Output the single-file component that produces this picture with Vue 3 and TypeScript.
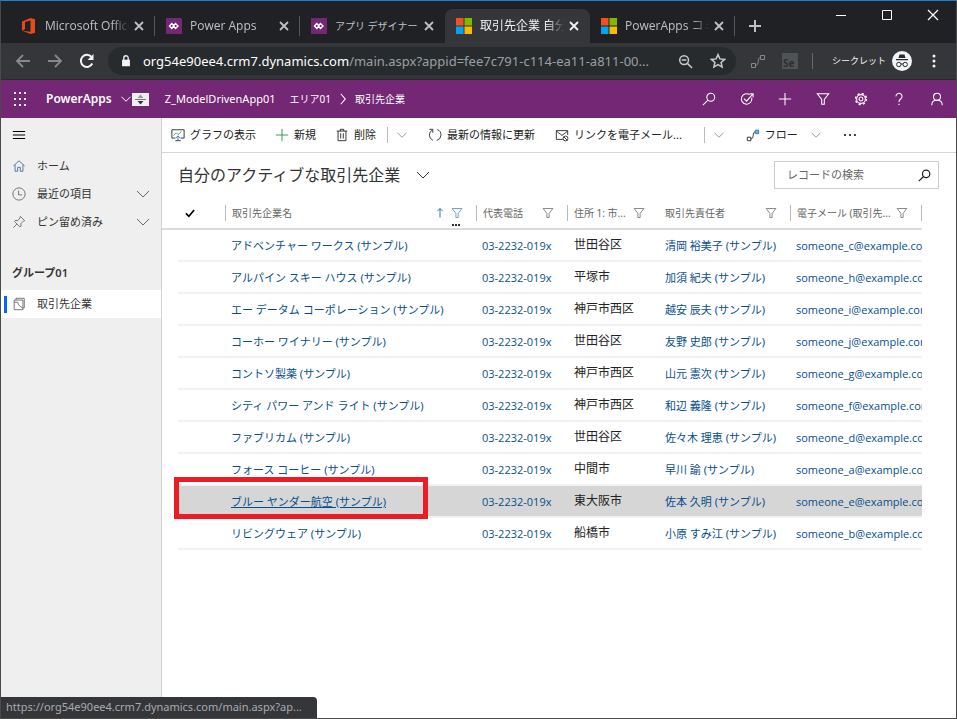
<script setup lang="ts">
import { h, ref } from 'vue'

type Shape = [string, Record<string, string | number>]

const line = (d: string, extra: Record<string, string | number> = {}): Shape => ['path', { d, ...extra }]
const solid = { fill: 'currentColor', stroke: 'none' }

const icons: Record<string, Shape[]> = {
  close: [line('M4 4l8 8M12 4l-8 8')],
  winClose: [line('M3 3l10 10M13 3L3 13')],
  plus: [line('M8 2v12M2 8h12')],
  add: [line('M8 1v14M1 8h14')],
  minimize: [line('M3 8.5h10')],
  maximize: [line('M3.5 3.5h9v9h-9z')],
  back: [line('M15 8H2M8 2L2 8l6 6')],
  forward: [line('M1 8h13M8 2l6 6-6 6')],
  reload: [line('M13.3 10.5A6 6 0 1 1 12.5 4'), line('M14.5 1v6h-6z', solid)],
  lock: [
    line('M3.5 6.5h9v7.5h-9z', solid),
    line('M5.5 7V4.5a2.5 2.5 0 0 1 5 0V7')
  ],
  zoomOut: [['circle', { cx: 6.5, cy: 6.5, r: 4.7 }], line('M10 10l5 5M4 6.5h5')],
  star: [line('M8 1.6l1.9 4.3 4.7.5-3.5 3.1 1 4.6L8 11.7l-4.1 2.4 1-4.6-3.5-3.1 4.7-.5z')],
  flow: [line('M1.5 10.5h4v4h-4zM10.5 2.5h4v4h-4zM5.5 12.5c4 0 1.5-8 5-8')],
  search: [['circle', { cx: 10, cy: 6, r: 4.5 }], line('M6.8 9.2L1 15')],
  target: [line('M11 3A6 6 0 1 0 13.4 6.5M4.5 7.5L7.5 10.5 14.5 2.5M11 2h4v4')],
  filter: [line('M1.5 2h13L9.5 8.5V14H6.5V8.5z')],
  gear: [
    ['circle', { cx: 8, cy: 8, r: 5 }],
    ['circle', { cx: 8, cy: 8, r: 2.2 }],
    ['circle', { cx: 8, cy: 8, r: 6.3, 'stroke-dasharray': '2.5 2.45', 'stroke-width': 1.6 }]
  ],
  help: [line('M4.5 5a3.5 3.5 0 1 1 6 2.4C9 8.8 8 9.3 8 11.3'), line('M7.3 13.5h1.4v1.4H7.3z', solid)],
  person: [['circle', { cx: 8, cy: 5.5, r: 4 }], line('M2 15c0-4 2.5-5.5 6-5.5s6 1.5 6 5.5')],
  menu: [line('M1 4h14M1 8h14M1 12h14')],
  home: [line('M1.5 8L8 2l6.5 6M3.5 6.5V14h3v-4.5h3V14h3V6.5')],
  clock: [['circle', { cx: 8, cy: 8, r: 7 }], line('M7.5 4v5h4')],
  pin: [line('M9.5 1.5l5 5-1.5.5-3 3 .5 2.5-1.5 1L3 7.5l1-1.5 2.5.5 2.5-3zM5.5 10.5L1.5 14.5')],
  chevron: [line('M2 5l6 6 6-6')],
  chevronRight: [line('M5 1l6 7-6 7')],
  entity: [line('M2.5 3.5h10v11h-10zM4.5 3.5v-2h9.5v11h-1.5M2.5 6h4l1 3 5 4')],
  chart: [
    line('M1 2h14v9.5h-4M5 11.5H1V2M5 14.5h6'),
    line('M3 8.5l3-3 2 2 4-3.5', { stroke: '#2a9d55' }),
    line('M8 9v5M5.5 11.5L8 9l2.5 2.5', { stroke: '#2c74b5' })
  ],
  trash: [line('M2 3.5h12M6 3.5v-2h4v2M3.5 3.5v11h9v-11M6.5 6v6M9.5 6v6')],
  refresh: [line('M10.5 1.8A6.5 6.5 0 0 1 10 14.2M5.5 14A6.5 6.5 0 0 1 5 2.3M1.5 1.5h4V5.5')],
  mail: [line('M14.5 8V3h-13v10H9M1.5 3.5L8 8.5l6.5-5'), ['circle', { cx: 12, cy: 12, r: 2.8 }], line('M10 10l4 4')],
  commandFlow: [
    line('M1.5 10.5h4v4h-4zM5.5 12.5c4 0 1.5-8 5-8'),
    line('M10.5 2.5h4v4h-4z', { fill: '#66b2e8', stroke: '#2c74b5' })
  ],
  up: [line('M8 14V2M4.5 5.5L8 2l3.5 3.5')],
  check: [line('M2.5 8.5l4 4 7-8.5')]
}

const Icon = (props: { name: string; size?: number; weight?: number }) =>
  h(
    'svg',
    {
      class: 'icon',
      viewBox: '0 0 16 16',
      width: props.size ?? 14,
      height: props.size ?? 14,
      fill: 'none',
      stroke: 'currentColor',
      'stroke-width': props.weight ?? 1,
      'aria-hidden': 'true'
    },
    icons[props.name].map(([tag, attrs]) => h(tag, attrs))
  )
Icon.props = ['name', 'size', 'weight']

interface Tab { title: string; logo: 'office' | 'power' | 'windows'; active?: boolean; compact?: boolean }
const tabs: Tab[] = [
  { title: 'Microsoft Office', logo: 'office' },
  { title: 'Power Apps', logo: 'power' },
  { title: 'アプリ デザイナー', logo: 'power', compact: true },
  { title: '取引先企業 自分', logo: 'windows', active: true },
  { title: 'PowerApps コミ', logo: 'windows' }
]

const headerActions = [
  { icon: 'search', label: '検索' },
  { icon: 'target', label: 'タスク' },
  { icon: 'add', label: '追加' },
  { icon: 'filter', label: 'フィルター' },
  { icon: 'gear', label: '設定' },
  { icon: 'help', label: 'ヘルプ' },
  { icon: 'person', label: 'アカウント' }
]

const navItems = [
  { icon: 'home', label: 'ホーム', expandable: false },
  { icon: 'clock', label: '最近の項目', expandable: true },
  { icon: 'pin', label: 'ピン留め済み', expandable: true }
]

interface Account { name: string; city: string; contact: string; email: string }
const accounts: Account[] = [
  { name: 'アドベンチャー ワークス (サンプル)', city: '世田谷区', contact: '清岡 裕美子 (サンプル)', email: 'c' },
  { name: 'アルパイン スキー ハウス (サンプル)', city: '平塚市', contact: '加須 紀夫 (サンプル)', email: 'h' },
  { name: 'エー データム コーポレーション (サンプル)', city: '神戸市西区', contact: '越安 辰夫 (サンプル)', email: 'i' },
  { name: 'コーホー ワイナリー (サンプル)', city: '世田谷区', contact: '友野 史郎 (サンプル)', email: 'j' },
  { name: 'コントソ製薬 (サンプル)', city: '神戸市西区', contact: '山元 憲次 (サンプル)', email: 'g' },
  { name: 'シティ パワー アンド ライト (サンプル)', city: '神戸市西区', contact: '和辺 義隆 (サンプル)', email: 'f' },
  { name: 'ファブリカム (サンプル)', city: '世田谷区', contact: '佐々木 理恵 (サンプル)', email: 'd' },
  { name: 'フォース コーヒー (サンプル)', city: '中間市', contact: '早川 諭 (サンプル)', email: 'a' },
  { name: 'ブルー ヤンダー航空 (サンプル)', city: '東大阪市', contact: '佐本 久明 (サンプル)', email: 'e' },
  { name: 'リビングウェア (サンプル)', city: '船橋市', contact: '小原 すみ江 (サンプル)', email: 'b' }
]
const columns = ['取引先企業名', '代表電話', '住所 1: 市...', '取引先責任者', '電子メール (取引先...']
const hovered = 8
const query = ref('')
</script>

<template>
  <div class="window">
    <header class="tab-strip">
      <div v-for="tab in tabs" :key="tab.title" class="tab" :class="{ active: tab.active, compact: tab.compact }">
        <svg v-if="tab.logo === 'office'" class="logo" viewBox="0 0 16 16" aria-hidden="true">
          <path d="M1 3.5L9.5 0 14 1.3v13.4L9.5 16 1 12.8l8.5 1V2.5L4 4v7.3l-3 1.5z" fill="#e64a19" />
        </svg>
        <svg v-else-if="tab.logo === 'power'" class="logo" viewBox="0 0 16 16" aria-hidden="true">
          <path d="M0 0h16v16H0z" fill="#742774" />
          <path d="M5.8 5.5L3.5 8l2.3 2.5L8 8zM9.5 5.5L7.3 8l2.2 2.5L12 8z" fill="none" stroke="#fff" stroke-width="1.4" />
        </svg>
        <svg v-else class="logo" viewBox="0 0 16 16" aria-hidden="true">
          <path d="M0 0h7.5v7.5H0z" fill="#f25022" /><path d="M8.5 0H16v7.5H8.5z" fill="#7fba00" />
          <path d="M0 8.5h7.5V16H0z" fill="#00a4ef" /><path d="M8.5 8.5H16V16H8.5z" fill="#ffb900" />
        </svg>
        <span class="tab-title">{{ tab.title }}</span>
        <button class="tab-close" aria-label="タブを閉じる"><Icon name="close" :size="16" :weight="1.8" /></button>
      </div>
      <button class="new-tab" aria-label="新しいタブ"><Icon name="plus" :size="16" :weight="2" /></button>
      <div class="window-controls">
        <button aria-label="最小化"><Icon name="minimize" :size="16" /></button>
        <button aria-label="最大化"><Icon name="maximize" :size="16" /></button>
        <button aria-label="閉じる"><Icon name="winClose" :size="16" :weight="1.3" /></button>
      </div>
    </header>

    <div class="toolbar">
      <button class="tool dim" aria-label="戻る"><Icon name="back" :size="16" :weight="1.8" /></button>
      <button class="tool dim" aria-label="進む"><Icon name="forward" :size="16" :weight="1.8" /></button>
      <button class="tool" aria-label="再読み込み"><Icon name="reload" :size="16" :weight="2" /></button>
      <div class="omnibox">
        <Icon name="lock" :size="14" :weight="1.5" />
        <span class="url"><b>org54e90ee4.crm7.dynamics.com</b>/main.aspx?appid=fee7c791-c114-ea11-a811-00...</span>
        <button class="tool" aria-label="縮小"><Icon name="zoomOut" :size="15" :weight="1.6" /></button>
        <button class="tool" aria-label="ブックマーク"><Icon name="star" :size="16" :weight="1.5" /></button>
      </div>
      <button class="tool ext" aria-label="フロー拡張"><Icon name="flow" :size="16" /></button>
      <button class="tool" aria-label="Selenium">
        <span class="selenium">Se</span>
      </button>
      <span class="tool-divider"></span>
      <span class="secret">シークレット</span>
      <svg class="incognito" viewBox="0 0 20 20" aria-hidden="true">
        <circle cx="10" cy="10" r="10" fill="#f1f3f4" />
        <path d="M6.5 7l1-3.5h5l1 3.5zM4 8h12v1.3H4z" fill="#292c2f" />
        <g fill="none" stroke="#292c2f"><circle cx="6.8" cy="13.5" r="2.2" /><circle cx="13.2" cy="13.5" r="2.2" /><path d="M9 13h2" /></g>
      </svg>
      <button class="tool more" aria-label="メニュー">
        <svg viewBox="0 0 4 14" width="4" height="14" fill="currentColor"><circle cx="2" cy="2" r="1.5" /><circle cx="2" cy="7" r="1.5" /><circle cx="2" cy="12" r="1.5" /></svg>
      </button>
    </div>

    <div class="app-header">
      <button class="waffle" aria-label="アプリ起動ツール"><i v-for="n in 9" :key="n"></i></button>
      <strong class="brand">PowerApps</strong>
      <button class="brand-menu" aria-label="アプリの切り替え">
        <Icon name="chevron" :size="12" :weight="1.3" />
        <svg class="spinner" viewBox="0 0 17 13" aria-hidden="true">
          <path d="M0 0h17v13H0z" fill="#f0f0f0" /><path d="M5.5 5l3-3.5 3 3.5z" fill="#999" />
          <path d="M3 6.5h11" stroke="#777" /><path d="M5.5 8l3 3.5 3-3.5z" fill="#333" />
        </svg>
      </button>
      <a class="app-name" href="#">Z_ModelDrivenApp01</a>
      <nav class="crumbs" aria-label="パンくず">
        <a href="#">エリア01</a><Icon name="chevronRight" :size="12" :weight="1.5" /><a href="#">取引先企業</a>
      </nav>
      <div class="header-actions">
        <button v-for="a in headerActions" :key="a.icon" :aria-label="a.label"><Icon :name="a.icon" :size="14" :weight="1.2" /></button>
      </div>
    </div>

    <div class="workspace">
      <aside class="sidebar">
        <button class="hamburger" aria-label="ナビゲーション"><Icon name="menu" :size="14" :weight="1.3" /></button>
        <nav>
          <a v-for="item in navItems" :key="item.label" class="nav-item" href="#">
            <Icon :name="item.icon" :size="14" /><span>{{ item.label }}</span>
            <Icon v-if="item.expandable" class="expand" name="chevron" :size="16" />
          </a>
          <h2 class="group">グループ01</h2>
          <a class="nav-item current" href="#"><Icon name="entity" :size="14" /><span>取引先企業</span></a>
        </nav>
      </aside>

      <main class="main">
        <div class="commands">
          <button class="command"><Icon name="chart" />グラフの表示</button>
          <button class="command create"><Icon name="add" />新規</button>
          <button class="command trash"><Icon name="trash" />削除</button>
          <span class="divider"></span>
          <button class="command caret" aria-label="その他の削除"><Icon name="chevron" :size="12" /></button>
          <button class="command refresh"><Icon name="refresh" />最新の情報に更新</button>
          <button class="command mail"><Icon name="mail" />リンクを電子メール...</button>
          <span class="divider wide"></span>
          <button class="command caret" aria-label="その他の共有"><Icon name="chevron" :size="12" /></button>
          <button class="command flow"><Icon name="commandFlow" />フロー<Icon class="muted" name="chevron" :size="12" /></button>
          <button class="command overflow" aria-label="その他"><i></i><i></i><i></i></button>
        </div>

        <div class="view-bar">
          <button class="view-title"><h1>自分のアクティブな取引先企業</h1><Icon name="chevron" :size="16" /></button>
          <label class="search">
            <input v-model="query" type="text" placeholder="レコードの検索" aria-label="レコードの検索" />
            <Icon name="search" :size="13" :weight="1.5" />
          </label>
        </div>

        <div class="grid">
          <table>
            <colgroup>
              <col class="c-gutter" /><col class="c-check" /><col /><col class="c-small" /><col class="c-small" /><col class="c-wide" /><col class="c-wide" />
            </colgroup>
            <thead>
              <tr>
                <td></td>
                <th class="check" aria-label="すべて選択"><Icon name="check" :size="12" :weight="2.2" /></th>
                <th v-for="(c, i) in columns" :key="c" scope="col">
                  <div class="head" :class="{ bare: i === 3, last: i === 4 }">
                    <span>{{ c }}</span>
                    <Icon v-if="i === 0" class="sort" name="up" :size="12" :weight="1.3" />
                    <Icon class="filter" name="filter" :size="12" />
                    <span v-if="i === 0" class="dots"><i></i><i></i><i></i></span>
                  </div>
                </th>
              </tr>
            </thead>
            <tbody>
              <tr v-for="(a, i) in accounts" :key="a.name" :class="{ hovered: i === hovered }">
                <td class="gutter"></td>
                <td class="mark"><span v-if="i === hovered" class="callout"></span></td>
                <td><a href="#">{{ a.name }}</a></td>
                <td class="latin"><a href="#">03-2232-019x</a></td>
                <td class="city">{{ a.city }}</td>
                <td class="contact"><a href="#">{{ a.contact }}</a></td>
                <td class="latin"><a href="#">someone_{{ a.email }}@example.com</a></td>
              </tr>
            </tbody>
          </table>
        </div>
      </main>
    </div>

    <div class="status">https://org54e90ee4.crm7.dynamics.com/main.aspx?ap...</div>
  </div>
</template>

<style>
body { margin: 0; background: #fff; }
</style>

<style scoped>
* { box-sizing: border-box; }
.window {
  position: relative;
  display: flex;
  flex-direction: column;
  min-height: 100vh;
  border: 1px solid #4a4a4a;
  border-top-color: #1a80d4;
  font-family: "Noto Sans", "Noto Sans CJK JP", sans-serif;
  font-size: 11px;
  line-height: 16px;
  color: #222;
  background: #fff;
}
button { display: flex; align-items: center; justify-content: center; padding: 0; border: 0; background: none; color: inherit; font: inherit; white-space: nowrap; }
a { color: inherit; text-decoration: none; }
.icon { flex: none; display: block; }

.tab-strip { display: flex; align-items: flex-end; height: 42px; padding-left: 9px; background: #202124; color: #bdc1c6; }
.tab { position: relative; display: flex; align-items: center; flex: 0 1 145px; min-width: 0; height: 34px; padding: 0 8px 0 11px; font-family: "Open Sans", "Noto Sans CJK JP", sans-serif; font-size: 12px; }
.tab::after { content: ""; position: absolute; right: 0; top: 7px; width: 1px; height: 20px; background: #55585c; }
.tab.active { background: #35363a; border-radius: 8px 8px 0 0; color: #f1f3f4; }
.tab.active::after, .tab:nth-child(3)::after { display: none; }
.tab.compact { font-size: 10px; }
.tab.compact .tab-title { mask-image: none; }
.logo { flex: none; width: 16px; height: 16px; }
.tab-title { flex: 1; min-width: 0; margin-left: 8px; overflow: hidden; white-space: nowrap; mask-image: linear-gradient(to right, #000 80%, transparent); }
.tab-close { flex: none; width: 16px; height: 16px; margin-left: 2px; }
.new-tab { width: 40px; height: 34px; }
.window-controls { display: flex; align-self: flex-start; margin-left: auto; color: #fff; }
.window-controls button { width: 46px; height: 28px; }

.toolbar { display: flex; align-items: center; height: 37px; padding: 0 6px; border-bottom: 1px solid #27292c; background: #35363a; color: #f1f3f4; }
.tool { flex: none; width: 32px; height: 28px; }
.dim { color: #85888c; }
.omnibox { display: flex; align-items: center; flex: 1; min-width: 0; height: 28px; margin: 0 6px 0 5px; padding: 0 2px 0 11px; border-radius: 14px; background: #282b2e; }
.omnibox .tool { color: #c8cacd; }
.url { flex: 1; min-width: 0; margin-left: 10px; overflow: hidden; white-space: nowrap; font-size: 13px; color: #9aa0a6; }
.url b { font-weight: 400; color: #fff; }
.ext { color: #85888c; }
.selenium { display: flex; align-items: flex-end; width: 16px; height: 16px; padding-left: 1px; background: #505356; color: #2c2e31; font-size: 10px; font-weight: 700; line-height: 12px; }
.tool-divider { width: 1px; height: 16px; margin: 0 19px 0 6px; background: #65686c; }
.secret { font-size: 9px; white-space: nowrap; }
.incognito { flex: none; width: 20px; height: 20px; margin-left: 6px; }
.more { margin-left: 6px; }

.app-header { display: flex; align-items: center; height: 38px; padding-left: 12px; background: #742774; color: #fff; }
.waffle { display: grid; grid-template-columns: repeat(3, 3px); gap: 2px; width: 15px; }
.waffle i { width: 2px; height: 2px; margin: 1px 0; background: #fff; }
.brand { margin-left: 18px; font-size: 12px; font-weight: 600; }
.brand-menu { margin-left: 8px; }
.spinner { width: 17px; height: 13px; }
.app-name { margin-left: 16px; }
.crumbs { display: flex; align-items: center; gap: 6px; margin-left: 14px; font-size: 10px; white-space: nowrap; }
.header-actions { display: flex; margin-left: auto; }
.header-actions button { width: 38px; height: 38px; }

.workspace { display: flex; flex: 1; }
.sidebar { flex: none; width: 161px; border-right: 1px solid #d2d2d2; background: #efefef; color: #333; }
.hamburger { width: 36px; height: 34px; color: #000; }
.nav-item { display: flex; align-items: center; height: 28px; padding: 0 10px 0 11px; }
.nav-item span { margin-left: 11px; }
.nav-item .icon { color: #666; }
.nav-item:first-child .icon { color: #4a6a98; }
.nav-item .expand { margin-left: auto; }
.group { margin: 29px 0 9px 11px; font-size: 11px; font-weight: 600; line-height: 16px; }
.current { position: relative; background: #fff; }
.current::before { content: ""; position: absolute; left: 3px; top: 6px; width: 3px; height: 17px; background: #0a63ff; }

.main { flex: 1; min-width: 0; }
.commands { display: flex; align-items: center; height: 35px; padding-left: 9px; border-bottom: 1px solid #d6d6d6; overflow: hidden; }
.command { flex: none; gap: 5px; height: 34px; }
.create { margin-left: 19px; }
.create .icon { color: #159447; }
.trash { margin-left: 19px; }
.divider { flex: none; width: 1px; height: 16px; margin: 0 8px 0 11px; background: #bbb; }
.divider.wide { margin-left: 22px; }
.caret, .muted { color: #777; }
.muted { margin-left: 7px; }
.refresh { margin-left: 20px; }
.mail { margin-left: 20px; }
.flow { margin-left: 21px; }
.overflow { gap: 3px; margin-left: 22px; }
.overflow i { width: 2px; height: 2px; background: #444; }

.view-bar { display: flex; align-items: center; justify-content: space-between; height: 44px; padding: 0 17px 0 16px; }
.view-title { gap: 15px; color: #333; }
.view-title h1 { margin: 0; font-size: 16px; font-weight: 400; line-height: 24px; }
.search { display: flex; align-items: center; width: 165px; height: 28px; padding: 0 7px 0 12px; border: 1px solid #ccc; }
.search input { flex: 1; min-width: 0; padding: 0; border: 0; outline: 0; background: none; font: inherit; color: #333; }
.search input::placeholder { color: #666; opacity: 1; }

.grid { margin-right: 34px; }
table { width: 100%; table-layout: fixed; border-collapse: separate; border-spacing: 0; }
.c-gutter { width: 16px; }
.c-check { width: 47px; }
.c-small { width: 91px; }
.c-wide { width: 132px; }
thead th, thead td { height: 33px; padding: 0; border-bottom: 2px solid #dcdcdc; font-size: 10px; font-weight: 400; text-align: left; color: #666; }
thead .check { padding-left: 6px; color: #000; }
.head { position: relative; display: flex; align-items: center; height: 16px; padding: 0 13px 0 6px; border-left: 1px solid #bbb; white-space: nowrap; }
.head.bare { border-left-color: transparent; }
.head.last { border-right: 1px solid #bbb; }
.sort { margin-left: auto; color: #2c74b5; }
.filter { margin-left: auto; }
.sort + .filter { margin-left: 5px; color: #4a86bd; }
.dots { position: absolute; right: 16px; bottom: -5px; display: flex; gap: 1px; }
.dots i { width: 2px; height: 2px; background: #333; }
tbody td { height: 32px; padding: 2px 0 0 6px; border-bottom: 2px solid #f2f2f2; overflow: hidden; white-space: nowrap; color: #064f8c; }
tbody .gutter { padding: 0; border: 0; }
tbody .latin { font-family: "Open Sans", "Noto Sans", sans-serif; }
tbody .contact { padding-left: 7px; }
tbody .city { padding: 0 0 0 7px; font-size: 12px; color: #222; }
.hovered td:not(.gutter) { background: #d6d6d6; }
.hovered td:nth-child(3) a { text-decoration: underline; }
tbody .mark { position: relative; overflow: visible; }
.callout { position: absolute; z-index: 1; left: -4px; top: -9px; width: 254px; height: 42px; border: 5px solid #ed1c24; }

.status { position: absolute; left: 0; bottom: 0; height: 21px; padding: 2px 15px 0 5px; border-radius: 0 4px 0 0; background: #35363a; color: #a7abb0; white-space: nowrap; }
</style>
